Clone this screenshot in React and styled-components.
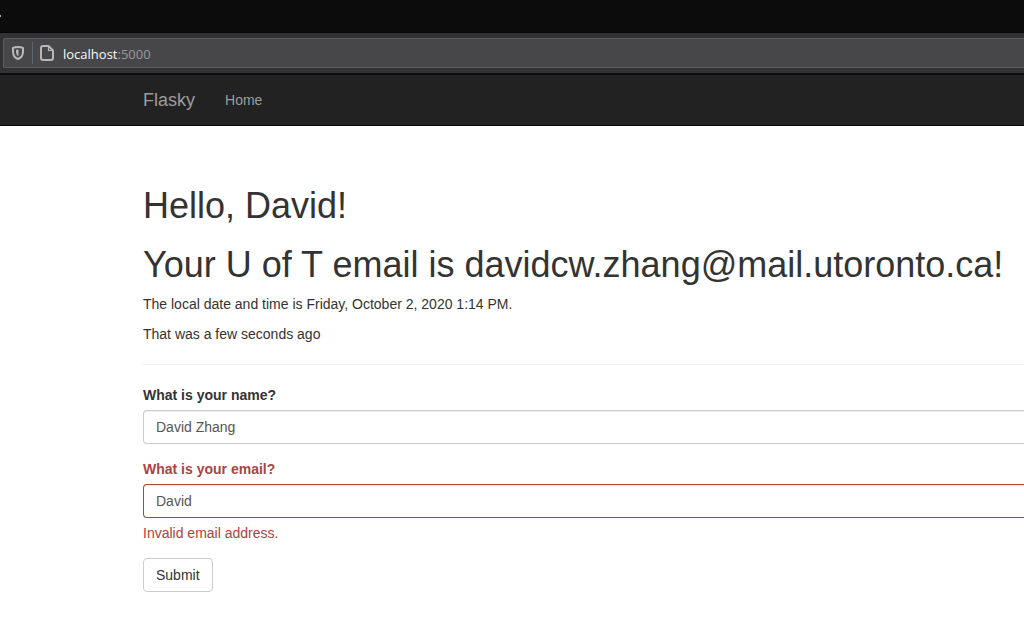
import React from "react";
import styled, { createGlobalStyle } from "styled-components";

const GlobalStyle = createGlobalStyle`
  *, *::before, *::after { box-sizing: border-box; }
  body {
    margin: 0;
    background: #fff;
    color: #333;
    font: 14px/20px "Liberation Sans", Arial, sans-serif;
    overflow-x: hidden;
  }
`;

const TabStrip = styled.div`
  height: 33px;
  padding-top: 15px;
  background: #0c0c0d;
  border-bottom: 1px solid #050505;
`;

const TabMark = styled.span`
  display: block;
  width: 1px;
  height: 2px;
  background: #a8a8a8;
`;

const Toolbar = styled.div`
  padding: 5px 0 5px 3px;
  background: #323234;
  border-bottom: 2px solid #0c0c0d;
`;

const AddressBar = styled.div`
  display: flex;
  align-items: center;
  height: 30px;
  padding-left: 6px;
  background: #474749;
  border: 1px solid #5c5c5e;
  border-right: 0;
  border-radius: 2px 0 0 2px;
`;

const IconButton = styled.button`
  display: flex;
  padding: 0;
  border: 0;
  background: none;
  color: #b8b8b9;
`;

const Separator = styled.span`
  width: 1px;
  height: 22px;
  margin: 0 6px;
  background: #5f6670;
`;

const Url = styled.span`
  margin-left: 8px;
  padding-top: 2px;
  color: #99999a;
  font: 13px/20px "Open Sans", "Noto Sans", sans-serif;
`;

const Host = styled.span`
  color: #f9f9fa;
`;

const Navbar = styled.nav`
  display: flex;
  align-items: center;
  gap: 30px;
  height: 51px;
  padding-left: 143px;
  background: #222;
  border-bottom: 1px solid #080808;
`;

const NavLink = styled.a`
  color: #9d9d9d;
  font-size: ${(p) => (p.$brand ? "18px" : "14px")};
  line-height: 20px;
  text-decoration: none;
`;

const Content = styled.main`
  padding: 60px 0 36px 143px;
`;

const Heading = styled.h1`
  margin: 0 0 ${(p) => (p.$last ? "10px" : "20px")};
  font-size: 36px;
  font-weight: 400;
  line-height: 39px;
  white-space: nowrap;
`;

const Paragraph = styled.p`
  margin: 0 0 10px;
`;

const Rule = styled.hr`
  margin: 20px 0;
  border: 0;
  border-top: 1px solid #eee;
`;

const Field = styled.div`
  margin-bottom: 15px;
  color: ${(p) => (p.$invalid ? "#a94442" : "#333")};
`;

const Label = styled.label`
  display: block;
  margin-bottom: 5px;
  font-weight: 700;
`;

const TextInput = styled.input`
  display: block;
  width: 100%;
  height: 34px;
  padding: 6px 12px;
  background: #fff;
  border: 1px solid ${(p) => (p.$invalid ? "#a94442" : "#ccc")};
  border-right: 0;
  border-radius: 4px 0 0 4px;
  box-shadow: inset 0 1px 1px rgba(0, 0, 0, 0.075);
  color: #555;
  font: inherit;
`;

const HelpText = styled.p`
  margin: 5px 0 0;
`;

const SubmitButton = styled.button`
  display: block;
  padding: 6px 12px;
  background: #fff;
  border: 1px solid #ccc;
  border-radius: 4px;
  color: #333;
  font: inherit;
`;

const ShieldIcon = () => (
  <svg width="16" height="16" viewBox="0 0 16 16" aria-hidden="true">
    <path
      d="M8 2C10 2 11.7 2.4 13 3V6.500C13 10.300 11 13 8 14C5 13 3 10.300 3 6.500V3C4.300 2.400 6 2 8 2Z"
      fill="none"
      stroke="currentColor"
      strokeWidth="2"
      strokeLinejoin="round"
    />
    <path d="M8.500 4.500V11.500C6.800 10.500 6 9 6 6.800V4.800Z" fill="currentColor" />
  </svg>
);

const PageIcon = () => (
  <svg width="16" height="16" viewBox="0 0 16 16" aria-hidden="true">
    <path
      d="M4 1H9.500L14 5.500V13A2 2 0 0 1 12 15H4A2 2 0 0 1 2 13V3A2 2 0 0 1 4 1Z"
      fill="none"
      stroke="currentColor"
      strokeWidth="2"
      strokeLinejoin="round"
    />
    <path d="M9.500 1.500V5.500H13.500" fill="none" stroke="currentColor" strokeWidth="1.200" />
  </svg>
);

export default function App() {
  return (
    <>
      <GlobalStyle />
      <TabStrip>
        <TabMark />
      </TabStrip>
      <Toolbar>
        <AddressBar>
          <IconButton type="button" aria-label="Tracking protection">
            <ShieldIcon />
          </IconButton>
          <Separator />
          <IconButton type="button" aria-label="Site information">
            <PageIcon />
          </IconButton>
          <Url>
            <Host>localhost</Host>:5000
          </Url>
        </AddressBar>
      </Toolbar>
      <Navbar>
        <NavLink $brand href="#">Flasky</NavLink>
        <NavLink href="#">Home</NavLink>
      </Navbar>
      <Content>
        <Heading>Hello, David!</Heading>
        <Heading $last>Your U of T email is davidcw.zhang@mail.utoronto.ca!</Heading>
        <Paragraph>The local date and time is Friday, October 2, 2020 1:14 PM.</Paragraph>
        <Paragraph>That was a few seconds ago</Paragraph>
        <Rule />
        <form>
          <Field>
            <Label htmlFor="name">What is your name?</Label>
            <TextInput id="name" type="text" defaultValue="David Zhang" />
          </Field>
          <Field $invalid>
            <Label htmlFor="email">What is your email?</Label>
            <TextInput
              id="email"
              type="text"
              defaultValue="David"
              $invalid
              aria-invalid="true"
              aria-describedby="email-help"
            />
            <HelpText id="email-help">Invalid email address.</HelpText>
          </Field>
          <SubmitButton type="submit">Submit</SubmitButton>
        </form>
      </Content>
    </>
  );
}
